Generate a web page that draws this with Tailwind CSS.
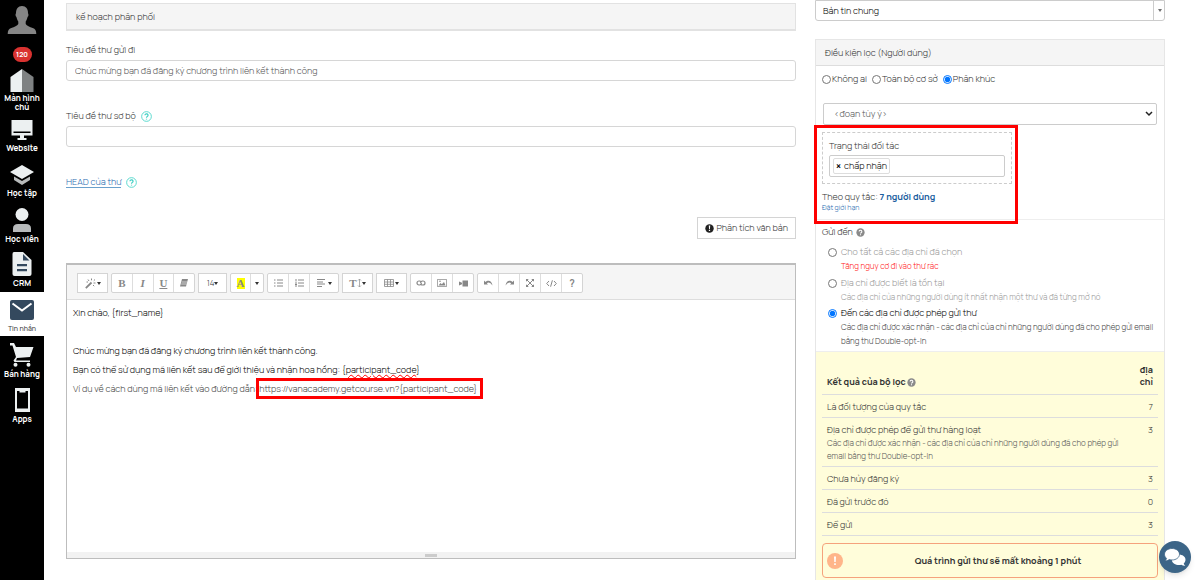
<!DOCTYPE html>
<html lang="vi">
<head>
<meta charset="utf-8">
<title>Tin nhắn</title>
<script src="https://cdn.jsdelivr.net/npm/@tailwindcss/browser@4"></script>
</head>
<body class="bg-white">
<svg class="hidden">
  <symbol id="caret" viewBox="0 0 4 3"><path d="M0 0h4L2 3z" fill="#333"/></symbol>
  <symbol id="help" viewBox="0 0 12 12"><circle cx="6" cy="6" r="5.3" fill="none" stroke="#4fd6cb" stroke-width="1"/><path d="M4.3 4.7a1.7 1.6 0 1 1 2.5 1.4c-.6.3-.8.6-.8 1.2M6 8.4v1" fill="none" stroke="#3fd0c4" stroke-width="1.3"/></symbol>
  <symbol id="helpsolid" viewBox="0 0 10 10"><circle cx="5" cy="5" r="4.6" fill="#8a8a8a"/><path d="M3.5 4a1.5 1.4 0 1 1 2.2 1.2c-.5.3-.7.5-.7 1M5 6.9v1.2" fill="none" stroke="#fff" stroke-width="1.2"/></symbol>
</svg>
<div class="flex min-h-screen font-['Manrope','Roboto','Noto_Sans',sans-serif] text-[9px] font-light leading-[12px] text-[#333]">

  <nav class="w-11 shrink-0 bg-black text-center text-[8px] font-bold leading-[9px] text-white">
    <a href="#" aria-label="Hồ sơ" class="flex h-[41px] justify-center pt-[6px]">
      <svg class="h-7 w-[30px]" viewBox="0 0 30 28"><path d="M15 0c4 0 6 3 6 7 0 1 .7 1 .4 2.5-.2 1-.8 1.300-1 2-.4 1.800-1 3-1.700 4v2.500c1 2 4 2.800 7 4 2.500 1 3.600 2.500 3.600 6H.7c0-3.500 1.100-5 3.600-6 3-1.200 6-2 7-4v-2.500c-.7-1-1.300-2.200-1.700-4-.2-.7-.8-1-1-2C8.300 8 9 8 9 7c0-4 2-7 6-7z" fill="#858585"/></svg>
    </a>
    <div class="flex h-[28px] justify-center pt-[6px]"><span class="h-[15px] w-[19px] rounded-full bg-[#d93230] text-[7px] leading-[15px]">120</span></div>
    <a href="#" class="flex h-[48px] flex-col items-center">
      <svg class="h-6 w-6 shrink-0" viewBox="0 0 24 24"><path d="M12 0 .5 8v15H12z" fill="#ecf0f1"/><path d="m12 0 11.500 8v15H12z" fill="#7f8283"/></svg>
      <span>Màn hình<br>chủ</span>
    </a>
    <a href="#" class="flex h-[45px] flex-col items-center gap-[3px] pt-[3px]">
      <svg class="h-5 w-[22px] shrink-0" viewBox="0 0 22 20"><path d="M.5 0h21v15.500H13V18h2.500v2h-9v-2H9v-2.500H.5z" fill="#ecf0f1"/><path d="M2.500 11.500h17v1.500h-17z" fill="#000"/></svg>
      <span>Website</span>
    </a>
    <a href="#" class="flex h-[45px] flex-col items-center gap-[3px] pt-[3px]">
      <svg class="h-5 w-6 shrink-0" viewBox="0 0 24 20"><path d="m12 0 12 7-12 7L0 7z" fill="#ecf0f1"/><path d="m4 11.500 8 4.500 8-4.500V15l-8 5-8-5z" fill="#b7babb"/></svg>
      <span>Học tập</span>
    </a>
    <a href="#" class="flex h-[45px] flex-col items-center gap-[2px] pt-[1px]">
      <svg class="h-6 w-5 shrink-0" viewBox="0 0 20 24"><circle cx="10" cy="6.500" r="6.500" fill="#ecf0f1"/><path d="M1 24v-3.500Q1 16 6 16h8q5 0 5 4.500V24z" fill="#b7babb"/></svg>
      <span>Học viên</span>
    </a>
    <a href="#" class="flex h-10 flex-col items-center gap-[2px]">
      <svg class="h-6 w-5 shrink-0" viewBox="0 0 20 24"><path d="M2 0h9l8.500 8v14q0 2-2 2H2.500Q.5 24 .5 22V2Q.5 0 2 0z" fill="#ecf0f1"/><path d="M11 2v6.500h6.500zM5 12h10v2.200H5zM5 17h10v2.200H5z" fill="#34495e"/></svg>
      <span>CRM</span>
    </a>
    <a href="#" aria-current="page" class="flex h-11 flex-col items-center gap-1 bg-white pt-2 text-[7px] font-medium text-[#444]">
      <svg class="h-5 w-6 shrink-0" viewBox="0 0 24 20"><rect width="24" height="20" rx="2" fill="#34495e"/><path d="m2.500 3.500 9.500 7 9.500-7" fill="none" stroke="#fff" stroke-width="2"/></svg>
      <span>Tin nhắn</span>
    </a>
    <a href="#" class="flex h-[45px] flex-col items-center gap-[2px] pt-[7px]">
      <svg class="h-6 w-6 shrink-0" viewBox="0 0 24 24"><path d="M0 0h4l2 4h17.500l-3.500 10-13 1-1 2.500h14V19H4.500l-1-1.500L6 14 2.500 2.500H0z" fill="#ecf0f1"/><circle cx="5.500" cy="21.800" r="2" fill="#ecf0f1"/><circle cx="18.500" cy="21.800" r="2" fill="#ecf0f1"/></svg>
      <span>Bán hàng</span>
    </a>
    <a href="#" class="flex h-[45px] flex-col items-center gap-[2px] pt-[7px]">
      <svg class="h-6 w-[15px] shrink-0" viewBox="0 0 15 24"><path d="M0 0h15v24H0zM2 3v17.500h11V3h-2.500v1.500h-6V3z" fill="#ecf0f1" fill-rule="evenodd"/></svg>
      <span>Apps</span>
    </a>
  </nav>

  <main class="ml-[22px] flex min-w-0 flex-1 flex-col pt-[3px]">
    <div class="flex h-7 items-center border border-[#e2e2e2] border-b-2 bg-[#f5f5f5] px-[9px]">kế hoạch phân phối</div>
    <label for="subject" class="mt-[13px]">Tiêu đề thư gửi đi</label>
    <input id="subject" value="Chúc mừng bạn đã đăng ký chương trình liên kết thành công" class="mt-1 h-[21px] w-full rounded-[3px] border border-[#d6d6d6] px-2 text-[#555]">
    <div class="mt-[29px] flex items-center gap-[5px]"><label for="preheader">Tiêu đề thư sơ bộ</label><svg class="h-[11px] w-[11px]"><use href="#help"/></svg></div>
    <input id="preheader" class="mt-1 h-[21px] w-full rounded-[3px] border border-[#d6d6d6] px-2">
    <div class="mt-[29px] flex items-center gap-[5px]"><a href="#" class="border-b border-[#6aa0cc] text-[#1f6cb0] leading-[11px]">HEAD của thư</a><svg class="h-[11px] w-[11px]"><use href="#help"/></svg></div>
    <button class="mt-[29px] flex h-[22px] items-center gap-[2px] self-end border border-[#d4d4d4] px-[7px]">
      <svg class="h-[9px] w-[9px]" viewBox="0 0 10 10"><circle cx="5" cy="5" r="4.700" fill="#222"/><path d="M4.200 1.800h1.600l-.3 3.700h-1zM4.300 6.500h1.400v1.400H4.300z" fill="#fff"/></svg>Phân tích văn bản
    </button>

    <section class="mb-[21px] mt-6 flex flex-1 flex-col border border-[#bdbdbd] border-t-2">
      <div class="flex h-[35px] items-center gap-[3px] border-b border-[#ddd] bg-[#f5f5f5] px-[10px] pt-[2px] [&_svg]:shrink-0">
        <button aria-label="Kiểu" class="flex h-5 w-[31px] items-center justify-center gap-[1px] border border-[#d4d4d4] bg-white">
          <svg class="h-[11px] w-[11px]" viewBox="0 0 11 11" fill="none" stroke="#888"><path d="m.8 10.200 5.700-5.700" stroke-width="1.800"/><path d="M3 1.500 4 3M6.500.5v1.800M10 1.500 8.800 2.700M8.500 5h2M8 7l1.200 1.200M1.500 4H3"/></svg><svg class="h-[3px] w-1"><use href="#caret"/></svg>
        </button>
        <div class="flex h-5 w-[84px] divide-x divide-[#ddd] rounded-[2px] border border-[#d4d4d4] bg-white font-['Liberation_Serif',serif] text-[11px] text-[#888] [&>button]:flex [&>button]:flex-1 [&>button]:items-center [&>button]:justify-center">
          <button class="font-bold">B</button><button class="font-bold italic">I</button><button class="font-bold underline">U</button>
          <button aria-label="Xóa định dạng"><svg class="h-2 w-2" viewBox="0 0 8 8"><path d="M2 0h6L6 7.500H0z" fill="#888"/><path d="M1.200 5h5.500M1.700 3h5.500" stroke="#fff" stroke-width=".6"/></svg></button>
        </div>
        <button class="flex h-5 w-[29px] items-center justify-center border border-[#d4d4d4] bg-white text-[8px]">14<svg class="h-[3px] w-1"><use href="#caret"/></svg></button>
        <div class="flex h-5 w-[34px] divide-x divide-[#ddd] rounded-[2px] border border-[#d4d4d4] bg-white">
          <button class="flex w-5 items-center justify-center"><span class="w-2 bg-[#ff0] font-['Liberation_Serif',serif] text-[11px] font-bold leading-[11px] text-[#888]">A</span></button>
          <button aria-label="Màu khác" class="flex flex-1 items-center justify-center"><svg class="h-[3px] w-1"><use href="#caret"/></svg></button>
        </div>
        <div class="flex h-5 w-[72px] divide-x divide-[#ddd] rounded-[2px] border border-[#d4d4d4] bg-white [&>button]:flex [&>button]:items-center [&>button]:justify-center">
          <button aria-label="Danh sách" class="w-[21px]"><svg class="h-2 w-[9px]" viewBox="0 0 9 8" stroke="#888"><path d="M0 1h1.500M3 1h6M0 4h1.500M3 4h6M0 7h1.500M3 7h6"/></svg></button>
          <button aria-label="Danh sách số" class="w-[21px]"><svg class="h-2 w-[9px]" viewBox="0 0 9 8" stroke="#888"><path d="M1 0v2.500M3 1h6M0 4h2M3 4h6M0 7h2M3 7h6M0 5.500h2"/></svg></button>
          <button aria-label="Căn lề" class="flex-1 gap-[3px]"><svg class="h-2 w-2" viewBox="0 0 8 8" stroke="#888"><path d="M0 .5h8M0 3h6M0 5h8M0 7.500h5"/></svg><svg class="h-[3px] w-1"><use href="#caret"/></svg></button>
        </div>
        <button class="flex h-5 w-[31px] items-center justify-center border border-[#d4d4d4] bg-white font-['Liberation_Serif',serif] text-[11px] font-bold text-[#888]">T<svg class="h-2 w-[5px]" viewBox="0 0 5 8"><path d="M2.500 0v8M1 1.500 2.500 0 4 1.500M1 6.500 2.500 8 4 6.500" fill="none" stroke="#999" stroke-width=".8"/></svg><svg class="h-[3px] w-1"><use href="#caret"/></svg></button>
        <button aria-label="Bảng" class="flex h-5 w-[31px] items-center justify-center gap-[1px] border border-[#d4d4d4] bg-white"><svg class="h-2 w-[10px]" viewBox="0 0 10 8"><path d="M.5.5h9v7h-9zM.5 3h9M.5 5.300h9M3.500.5v7M6.500.5v7" fill="none" stroke="#888" stroke-width=".8"/></svg><svg class="h-[3px] w-1"><use href="#caret"/></svg></button>
        <div class="flex h-5 w-[64px] divide-x divide-[#ddd] rounded-[2px] border border-[#d4d4d4] bg-white [&>button]:flex [&>button]:flex-1 [&>button]:items-center [&>button]:justify-center">
          <button aria-label="Liên kết"><svg class="h-[6px] w-[10px]" viewBox="0 0 10 6"><path d="M5 1.500Q4.500 1 3.500 1H3a2 2 0 0 0 0 4h.5Q5 5 5.500 3M5 4.500q.5.500 1.500.500H7a2 2 0 0 0 0-4h-.5Q5 1 4.500 3" fill="none" stroke="#888" stroke-width="1.200"/></svg></button>
          <button aria-label="Hình ảnh"><svg class="h-2 w-[10px]" viewBox="0 0 10 8"><path d="M.4.4h9.200v7.200H.4z" fill="none" stroke="#888" stroke-width=".8"/><path d="m1.500 6.500 2-2.500 1.300 1.300L7 3l1.500 3.500z" fill="#888"/><circle cx="3" cy="2.300" r=".8" fill="#888"/></svg></button>
          <button aria-label="Video"><svg class="h-[7px] w-[9px]" viewBox="0 0 9 7"><path d="M3.500.5H9v6H3.500zM0 1.500l3 1.300v1.500L0 5.500z" fill="#888"/></svg></button>
        </div>
        <div class="flex h-5 w-[106px] divide-x divide-[#ddd] rounded-[2px] border border-[#d4d4d4] bg-white text-[10px] font-bold text-[#888] [&>button]:flex [&>button]:flex-1 [&>button]:items-center [&>button]:justify-center">
          <button aria-label="Hoàn tác"><svg class="h-[6px] w-[9px]" viewBox="0 0 9 6"><path d="M0 .5v4h4L2.800 3.300Q5.500 1 8.500 5.500 7.500 0 3.500.8 2.200 1.200 1.500 2z" fill="#888"/></svg></button>
          <button aria-label="Làm lại"><svg class="h-[6px] w-[9px]" viewBox="0 0 9 6"><path d="M9 .5v4H5l1.200-1.200Q3.500 1 .5 5.500 1.500 0 5.500.8 6.800 1.200 7.500 2z" fill="#888"/></svg></button>
          <button aria-label="Toàn màn hình"><svg class="h-2 w-2" viewBox="0 0 8 8"><path d="m1 1 6 6M7 1 1 7" stroke="#888"/><path d="M0 0h2.800L0 2.800zM8 0v2.800L5.200 0zM0 8V5.200L2.800 8zM8 8H5.200L8 5.200z" fill="#888"/></svg></button>
          <button aria-label="Mã nguồn"><svg class="h-[7px] w-[11px]" viewBox="0 0 11 7"><path d="M3 1 .7 3.500 3 6M8 1l2.300 2.500L8 6M6.400.3 4.600 6.700" fill="none" stroke="#888"/></svg></button>
          <button>?</button>
        </div>
      </div>
      <div contenteditable="true" spellcheck="false" class="flex-1 px-[6px] pt-[3px] leading-[19px] text-black">
        <p>Xin chào, {first_name}</p>
        <p><br></p>
        <p>Chúc mừng bạn đã đăng ký chương trình liên kết thành công.</p>
        <p>Bạn có thể sử dụng mã liên kết sau để giới thiệu và nhận hoa hồng: {<span class="underline decoration-[#ff0000] decoration-wavy decoration-1">participant_code</span>}</p>
        <p class="text-[#444]">Ví dụ về cách dùng mã liên kết vào đường dẫn: <span class="relative">https://vanacademy.getcourse.vn?{participant_code}<span class="pointer-events-none absolute -inset-y-1 -left-[3px] -right-[6px] border-3 border-[#fe0000]"></span></span></p>
      </div>
      <div class="flex h-[6px] items-center justify-center bg-[#f2f2f2]"><span class="h-[3px] w-3 bg-[#ccc]"></span></div>
    </section>
  </main>

  <aside class="ml-[19px] mr-[35px] flex w-[350px] shrink-0 flex-col">
    <div class="relative">
      <select aria-label="Danh mục" class="block h-[21px] w-full appearance-none rounded-b-[3px] border border-[#ccc] bg-white px-[7px] font-light text-black"><option>Bản tin chung</option></select>
      <span class="pointer-events-none absolute inset-y-0 right-0 flex w-3 items-center justify-center border-l border-[#ccc]"><svg class="h-[3px] w-1 opacity-70"><use href="#caret"/></svg></span>
    </div>
    <section class="relative mt-[18px] flex flex-1 flex-col border border-b-0 border-[#e6e6e6]">
      <h2 class="flex h-[26px] items-center border-b border-[#ddd] bg-[#f5f5f5] px-[9px]">Điều kiện lọc (Người dùng)</h2>
      <div class="mt-[7px] flex gap-[5px] px-[6px] [&>label]:flex [&>label]:items-center [&>label]:gap-[1px]">
        <label><input type="radio" name="scope" class="h-[9px] w-[9px]">Không ai</label>
        <label><input type="radio" name="scope" class="h-[9px] w-[9px]">Toàn bộ cơ sở</label>
        <label><input type="radio" name="scope" checked class="h-[9px] w-[9px]">Phân khúc</label>
      </div>
      <div class="relative mx-[7px] mt-[18px]">
        <select aria-label="Phân khúc" class="block h-[22px] w-full appearance-none rounded-[2px] border border-[#ccc] bg-white px-[10px] text-[#555]"><option>&lt;đoạn tùy ý&gt;</option></select>
        <svg class="pointer-events-none absolute right-1 top-2 h-[6px] w-2" viewBox="0 0 8 6"><path d="m1 1 3 3 3-3" fill="none" stroke="#222" stroke-width="1.500"/></svg>
      </div>
      <div class="pointer-events-none absolute -left-[2px] top-[85px] h-[99px] w-[204px] border-3 border-[#fe0000]"></div>
      <div class="ml-[6px] mt-[7px] w-[190px] border border-dashed border-[#ccc] px-[6px] pb-[6px] pt-[7px]">
        <label for="status">Trạng thái đối tác</label>
        <div class="mt-[3px] flex h-[22px] items-center rounded-[2px] border border-[#ccc] px-[3px]">
          <span class="flex h-4 shrink-0 items-center gap-[3px] rounded-[2px] border border-[#ddd] px-[2px] text-black"><button aria-label="Xóa" class="text-[10px] font-bold">×</button>chấp nhận</span>
          <input id="status" class="w-full min-w-0 outline-none">
        </div>
      </div>
      <p class="mt-[7px] px-[6px]">Theo quy tắc: <b class="font-bold text-[#1c5f9f]">7 người dùng</b></p>
      <a href="#" class="px-[6px] text-[7px] leading-[10px] text-[#1f6cb0]">Đặt giới hạn</a>
      <div class="mt-[6px] border-t border-[#eee] pl-[6px] pt-[6px]">
        <h3 class="flex items-center gap-[3px]">Gửi đến <svg class="h-[9px] w-[9px]"><use href="#helpsolid"/></svg></h3>
        <div class="mt-2 grid grid-cols-[9px_1fr] items-center gap-x-1 pl-[6px] text-[#999]">
          <input id="all" type="radio" name="to" class="h-[9px] w-[9px]"><label for="all">Cho tất cả các địa chỉ đã chọn</label>
          <p class="col-start-2 mb-[3px] text-[8px] leading-4 text-[#ff2020]">Tăng nguy cơ đi vào thư rác</p>
          <input id="known" type="radio" name="to" class="h-[9px] w-[9px]"><label for="known">Địa chỉ được biết là tồn tại</label>
          <p class="col-start-2 mb-[2px] text-[8px] leading-4">Các địa chỉ của những người dùng ít nhất nhận một thư và đã từng mở nó</p>
          <input id="allowed" type="radio" name="to" checked class="h-[9px] w-[9px]"><label for="allowed" class="text-black">Đến các địa chỉ được phép gửi thư</label>
          <p class="col-start-2 mb-[3px] mt-[1px] text-[8px] leading-[14px] text-[#444]">Các địa chỉ được xác nhận - các địa chỉ của chỉ những người dùng đã cho phép gửi email bằng thư Double-opt-In</p>
        </div>
      </div>
      <div class="flex-1 border-t border-[#eee] bg-[#fffdda] px-[6px] pb-[1px] pt-3">
        <table class="w-full border-collapse [&_td]:px-[5px] [&_td]:pb-1 [&_td]:pt-[6px] [&_td]:align-top [&_tr]:border-b [&_tr]:border-[#ddd]">
          <thead><tr class="align-bottom font-bold text-[#333]"><th class="px-[5px] pb-[6px] text-left"><span class="flex items-center gap-[1px]">Kết quả của bộ lọc<svg class="h-[9px] w-[9px]"><use href="#helpsolid"/></svg></span></th><th class="w-6 px-[5px] pb-[6px] text-right">địa chỉ</th></tr></thead>
          <tbody>
            <tr><td>Là đối tượng của quy tắc</td><td class="text-right">7</td></tr>
            <tr><td>Địa chỉ được phép để gửi thư hàng loạt<p class="w-[298px] text-[8px] leading-[13px] text-[#555]">Các địa chỉ được xác nhận - các địa chỉ của chỉ những người dùng đã cho phép gửi email bằng thư Double-opt-In</p></td><td class="text-right">3</td></tr>
            <tr><td>Chưa hủy đăng ký</td><td class="text-right">3</td></tr>
            <tr><td>Đã gửi trước đó</td><td class="text-right">0</td></tr>
            <tr><td>Để gửi</td><td class="text-right">3</td></tr>
          </tbody>
        </table>
        <div class="mt-[7px] flex h-[35px] items-center rounded-[4px] border border-[#f5a27c] px-1 font-bold text-[#333]">
          <svg class="h-4 w-4" viewBox="0 0 16 16"><circle cx="8" cy="8" r="8" fill="#ffb58a"/><path d="M7 3.500h2L8.700 9H7.300zM7.200 10.300h1.600V12H7.200z" fill="#fff"/></svg>
          <span class="flex-1 text-center">Quá trình gửi thư sẽ mất khoảng 1 phút</span>
        </div>
      </div>
    </section>
  </aside>
</div>
<button aria-label="Trò chuyện" class="fixed bottom-[7px] right-[9px] flex h-8 w-8 items-center justify-center rounded-full bg-[#3c6587] shadow-md">
  <svg class="h-[18px] w-[22px]" viewBox="0 0 22 18"><path d="M14.500 6.500c4 0 7 2.200 7 5.200 0 1.500-.7 2.800-1.800 3.700.2 1 .8 1.700 1.600 2.300-1.500.1-2.800-.2-4-1-4.500.9-9-1-9.500-4.500z" fill="#fff"/><path d="M8 .5c4.200 0 7.500 2.500 7.500 5.700S12.200 12 8 12c-1 0-2-.1-2.800-.4-1.200.9-2.700 1.400-4.200 1.300.8-.8 1.300-1.600 1.500-2.600C1.200 9.200.5 7.800.5 6.200.5 3 3.800.5 8 .5z" fill="#fff" stroke="#3c6587" stroke-width=".8"/></svg>
</button>
</body>
</html>
